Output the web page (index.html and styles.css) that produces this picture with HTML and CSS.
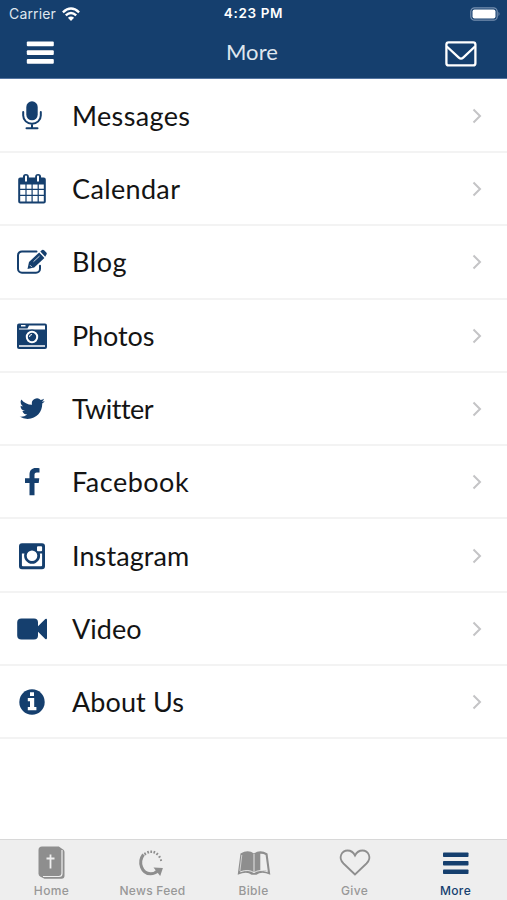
FILE: index.html
```html
<!DOCTYPE html>
<html lang="en">
<head>
<meta charset="utf-8">
<title>More</title>
<link rel="stylesheet" href="styles.css">
</head>
<body>
<div class="app">
  <header class="header">
    <div class="status">
      <div class="carrier"><span>Carrier</span>
        <svg width="18" height="14" viewBox="0 0 18 14"><g fill="none" stroke="#fff" stroke-width="2.400"><path d="M.9 5.300Q9-2.200 17.100 5.300M3.800 8.400Q9 3.500 14.200 8.400"/></g><path d="M9 14L5.900 10.800Q9 8 12.100 10.800Z" fill="#fff"/></svg>
      </div>
      <div class="time">4:23 PM</div>
      <svg class="battery" width="31" height="14" viewBox="0 0 31 14"><rect x=".8" y=".8" width="26.400" height="12.400" rx="3.800" fill="none" stroke="#7690b0" stroke-width="1.200"/><rect x="2.500" y="2.500" width="23" height="9" rx="2" fill="#fff"/><path d="M28.500 4.800q2 2.200 0 4.400z" fill="#7690b0"/></svg>
    </div>
    <div class="navbar">
      <svg width="28" height="24" viewBox="0 0 28 24" fill="#fff"><rect x=".8" y=".5" width="27" height="4.800" rx="1"/><rect x=".8" y="9.200" width="27" height="4.800" rx="1"/><rect x=".8" y="18" width="27" height="4.800" rx="1"/></svg>
      <h1>More</h1>
      <svg width="32" height="26" viewBox="0 0 32 26" fill="none" stroke="#fff" stroke-width="2.300" stroke-linejoin="round"><rect x="1.400" y="1.400" width="29" height="23" rx="2.200"/><path d="M1.800 5.500L13.800 16.600Q16 18.600 18.200 16.600L30 5.500"/></svg>
    </div>
  </header>
  <main class="list">
    <a class="row"><svg class="icon" viewBox="0 0 32 32"><rect x="10.300" y="1.300" width="11.400" height="19" rx="5.700"/><path class="line" d="M7.200 12v3.500a8.800 8.300 0 0 0 17.600 0V12M16 24v4M10.500 28.300h11"/></svg><span class="label messages">Messages</span><svg class="chevron" viewBox="0 0 10 16"><path d="M1.500 1.500L8 8l-6.500 6.500"/></svg></a>
    <a class="row"><svg class="icon" viewBox="0 0 32 32"><path fill-rule="evenodd" d="M4.200 4.500h2.700V4a3 3 0 0 1 6 0v.5h6.200V4a3 3 0 0 1 6 0v.5h2.700a2 2 0 0 1 2 2V28.500a2 2 0 0 1-2 2H4.200a2 2 0 0 1-2-2V6.500a2 2 0 0 1 2-2zM9 3.500v4.300a1 1 0 0 0 2 0V3.500a1 1 0 0 0-2 0zm12 0v4.300a1 1 0 0 0 2 0V3.500a1 1 0 0 0-2 0zM4.200 11.500v4.300h5.200v-4.300zm6.400 0v4.300h4.900v-4.300zm6.100 0v4.300h4.900v-4.300zm6.100 0v4.300h5v-4.300zM4.200 17v4.800h5.200V17zm6.400 0v4.800h4.900V17zm6.100 0v4.800h4.900V17zm6.100 0v4.800h5V17zM4.200 23v5.500h5.200V23zm6.400 0v5.500h4.900V23zm6.100 0v5.500h4.900V23zm6.100 0v5.500h5V23z"/></svg><span class="label calendar">Calendar</span><svg class="chevron" viewBox="0 0 10 16"><path d="M1.500 1.500L8 8l-6.500 6.500"/></svg></a>
    <a class="row"><svg class="icon" viewBox="0 0 32 32"><path class="line" d="M20.500 5.400H6a4 4 0 0 0-4 4v13.400a4 4 0 0 0 4 4h14a4 4 0 0 0 4-4v-3"/><path d="M11.500 22.900l1.500-7L23.200 6.400l5.200 5.600-10.200 9.500zM24.300 5.400l1.700-1.300q1.100-.8 2.100.2l2.200 2.300q1 1.100 0 2.200L29.200 10.700z"/><path d="M14 19.200l2 2M17.500 15.700l6-5.600" fill="none" stroke="#fff" stroke-width=".8"/></svg><span class="label blog">Blog</span><svg class="chevron" viewBox="0 0 10 16"><path d="M1.500 1.500L8 8l-6.500 6.500"/></svg></a>
    <a class="row"><svg class="icon" viewBox="0 0 32 32"><rect x="1" y="3.500" width="30" height="25.500" rx="2"/><path fill="#fff" d="M3 8.500h8.500l1.500-3h16v4H3zM5 5h4.500v1.500H5zM3 25.300h26v1.500H3z"/><circle cx="16" cy="17" r="7.500"/><circle cx="16" cy="17" r="5.200" fill="none" stroke="#fff" stroke-width="2"/><path d="M13.500 17a2.500 2.500 0 0 1 2.500-2.500" fill="none" stroke="#fff"/></svg><span class="label photos">Photos</span><svg class="chevron" viewBox="0 0 10 16"><path d="M1.500 1.500L8 8l-6.500 6.500"/></svg></a>
    <a class="row"><svg class="icon" viewBox="0 0 32 32"><path transform="translate(3.600 3.100) scale(1.050)" d="M23.950 4.570a10 10 0 0 1-2.820.770 4.960 4.960 0 0 0 2.160-2.720c-.950.550-2 .950-3.130 1.180a4.920 4.920 0 0 0-8.380 4.480C7.690 8.090 4.070 6.130 1.640 3.160a4.920 4.920 0 0 0 1.520 6.570 4.900 4.900 0 0 1-2.230-.610v.060a4.920 4.920 0 0 0 3.950 4.830 5 5 0 0 1-2.210.080 4.940 4.940 0 0 0 4.600 3.420A9.870 9.870 0 0 1 0 19.540a14 14 0 0 0 7.550 2.210c9.050 0 14-7.500 14-13.980l-.020-.640a10 10 0 0 0 2.420-2.560z"/></svg><span class="label twitter">Twitter</span><svg class="chevron" viewBox="0 0 10 16"><path d="M1.500 1.500L8 8l-6.500 6.500"/></svg></a>
    <a class="row"><svg class="icon" viewBox="0 0 32 32"><path d="M23.500 2.200v4.400h-2.600c-2 0-2.400 1-2.400 2.400v3.300h4.800l-.6 4.700h-4.200v12.300h-5V17H9v-4.700h4.500V8.400c0-4.300 2.500-6.500 6.300-6.500 1.800 0 3.300.1 3.700.3z"/></svg><span class="label facebook">Facebook</span><svg class="chevron" viewBox="0 0 10 16"><path d="M1.500 1.500L8 8l-6.500 6.500"/></svg></a>
    <a class="row"><svg class="icon" viewBox="0 0 32 32"><path fill-rule="evenodd" d="M6 3.300h20a3 3 0 0 1 3 3v20a3 3 0 0 1-3 3H6a3 3 0 0 1-3-3v-20a3 3 0 0 1 3-3zM5.900 13.600v11.600q0 1 1 1h18.200q1 0 1-1V13.600h-2.300a8 8 0 1 1-15.400 0zM22 6.200q-1 0-1 1v3q0 1 1 1h3.100q1 0 1-1v-3q0-1-1-1zM16 10.500a5.300 5.300 0 1 0 0 10.600 5.300 5.300 0 0 0 0-10.600z"/></svg><span class="label instagram">Instagram</span><svg class="chevron" viewBox="0 0 10 16"><path d="M1.500 1.500L8 8l-6.500 6.500"/></svg></a>
    <a class="row"><svg class="icon" viewBox="0 0 32 32"><path d="M5.500 5.500h12.500q4 0 4 4v3.700l7.300-7.100q1.700-1 1.700.8v18.200q0 1.800-1.700.8L22 18.800v3.700q0 4-4 4H5.500q-4.300 0-4.300-4v-13q0-4 4.300-4z"/></svg><span class="label video">Video</span><svg class="chevron" viewBox="0 0 10 16"><path d="M1.500 1.500L8 8l-6.500 6.500"/></svg></a>
    <a class="row"><svg class="icon" viewBox="0 0 32 32"><circle cx="16" cy="16" r="12.700"/><path fill="#fff" d="M14 6.200h4v3.700h-4zM11.800 12h6.400v9h2.200v3.300h-8.600V21H14v-5.700h-2.200z"/></svg><span class="label about">About Us</span><svg class="chevron" viewBox="0 0 10 16"><path d="M1.500 1.500L8 8l-6.500 6.500"/></svg></a>
  </main>
  <nav class="tabs">
    <a class="tab"><svg viewBox="0 0 36 36"><path d="M8 1.500h16.800l3.200 2.200q2.500 1 2.500 3v24q0 3-3 3H10.500L6.500 31.800q-2-1-2-3V5q0-3.500 3.500-3.500z"/><path d="M28 5v23.500q0 3-3 3H9" fill="none" stroke="#eee" stroke-width="1.200"/><path d="M16.500 9.500v14M12.500 13.500h8" fill="none" stroke="#eee" stroke-width="1.800"/></svg><span>Home</span></a>
    <a class="tab feed"><svg viewBox="0 0 36 36"><path d="M8.500 9.500C2.500 17.500 7 28.800 15.500 28.800q4.500 0 7.500-3.300" fill="none" stroke="#8e8e8e" stroke-width="3"/><path d="M18.500 22.600l9.400.4-2.700 8z"/><path d="M9.500 7.700l1.300 2.300M12.700 6l.9 2.500M16.200 5.400v2.700M19.700 6l-.8 2.500M22.900 8l-1.500 2.100M25.500 11.300l-1.900 1.100M27 15l-2 .3" fill="none" stroke="#8e8e8e" stroke-width="1.700"/></svg><span>News Feed</span></a>
    <a class="tab"><svg viewBox="0 0 36 36"><path d="M4.500 8.500Q12 4 18 8.500q6-4.500 13.500 0L34.300 29.800q-9-4-13.800 0h-5q-4.500-4-13.800 0z"/><path d="M24.300 8.700q3-.2 5.300 1.300l2.200 16.200q-3.500-1.300-7.500-.7z" fill="#eee"/><path d="M4.200 26.800q8.500-3 13.800.9 5.300-3.900 13.800-.9M18 9v18.500" fill="none" stroke="#eee" stroke-width=".9"/><path d="M5.800 10L3.900 26" fill="none" stroke="#eee" stroke-width=".7"/></svg><span>Bible</span></a>
    <a class="tab"><svg viewBox="0 0 36 36"><path d="M18 29.500L6.500 18.500C.5 12.500 5 5.500 10.500 5.500c3.500 0 6 2 7.500 5 1.500-3 4-5 7.500-5 5.500 0 10 7 4 13z" fill="none" stroke="#8e8e8e" stroke-width="1.800"/></svg><span>Give</span></a>
    <a class="tab active"><svg viewBox="0 0 36 36"><rect x="5" y="7.500" width="25.500" height="4.500" rx=".8"/><rect x="5" y="16" width="25.500" height="4.500" rx=".8"/><rect x="5" y="24.500" width="25.500" height="4.500" rx=".8"/></svg><span>More</span></a>
  </nav>
</div>
</body>
</html>
```

FILE: styles.css
```css
* { box-sizing: border-box; }
body { margin: 0; background: #fff; }
.app { width: 507px; height: 900px; display: flex; flex-direction: column; overflow: hidden; }
.header { height: 79px; background: #153f6e; border-bottom: 1px solid #5474a0; color: #fff; }
.status { height: 27px; display: grid; grid-template-columns: 1fr auto 1fr; align-items: center; padding: 0 8px 0 9px; font: 14px/27px Inter, sans-serif; }
.carrier { display: flex; align-items: center; gap: 6px; color: #dfe6ee; }
.carrier span { letter-spacing: .15px; }
.time { font-weight: 600; font-size: 13.5px; letter-spacing: .65px; margin-right: 1px; }
.battery { justify-self: end; margin-right: -2px; }
.navbar { height: 51px; display: grid; grid-template-columns: 1fr auto 1fr; align-items: center; padding: 1px 30px 0 26px; }
.navbar svg:last-child { justify-self: end; margin-top: 2px; }
.navbar h1 { margin: 0 0 2px; padding-left: 1px; font: 400 22px/28px Lato, sans-serif; letter-spacing: .1px; color: #dfe6ee; }
.list { flex: 1; padding-top: .7px; }
.row { height: 73.3px; display: flex; align-items: center; padding: 1px 25px 0 16px; border-bottom: 2px solid #f3f3f3; }
.icon { width: 32px; height: 32px; fill: #153f6e; margin-right: 24px; }
.icon .line { fill: none; stroke: #153f6e; stroke-width: 2; stroke-linecap: round; }
.label { flex: 1; font: 400 27px/36px Lato, sans-serif; color: #141414; font-variant-ligatures: none; }
.messages { letter-spacing: .35px; }
.calendar { letter-spacing: .35px; }
.blog { letter-spacing: .6px; }
.photos { letter-spacing: -.1px; }
.twitter { letter-spacing: -.5px; }
.facebook { letter-spacing: .5px; }
.instagram { letter-spacing: .1px; }
.about { letter-spacing: .1px; }
.chevron { width: 10px; height: 16px; fill: none; stroke: #c4c4c6; stroke-width: 2; }
.tabs { height: 61px; background: #eee; border-top: 1px solid #d8d8d8; display: grid; grid-template-columns: repeat(5, 1fr); padding: 0 1px; }
.tab { display: flex; flex-direction: column; align-items: center; font: 500 12px/16px Inter, sans-serif; letter-spacing: .35px; color: #989898; padding-top: 5px; }
.tab svg { width: 36px; height: 36px; fill: #8e8e8e; margin-bottom: 2px; }
.feed { letter-spacing: .25px; }
.active { color: #153f6e; }
.active svg { fill: #153f6e; }
```
